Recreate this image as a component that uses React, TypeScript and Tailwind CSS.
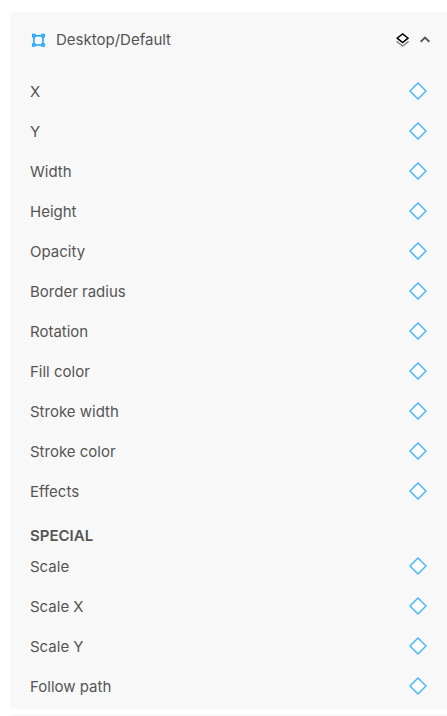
import { useState } from "react";

const properties = [
  "X",
  "Y",
  "Width",
  "Height",
  "Opacity",
  "Border radius",
  "Rotation",
  "Fill color",
  "Stroke width",
  "Stroke color",
  "Effects",
];

const specialProperties = ["Scale", "Scale X", "Scale Y", "Follow path"];

function FrameIcon() {
  return (
    <svg width="16" height="16" viewBox="0 0 16 16" fill="none" stroke="#18a0fb" aria-hidden="true">
      <path d="M5 3.8h7M5 13h7M3.9 5v7M13 5v7" strokeWidth="1.5" />
      <path
        d="M2.6 2.5h2.4v2.4H2.6zM11.9 2.5h2.4v2.4h-2.4zM2.6 11.8h2.4v2.4H2.6zM11.9 11.8h2.4v2.4h-2.4z"
        fill="#d4ecfd"
        strokeWidth="1.3"
      />
    </svg>
  );
}

function LayersIcon() {
  return (
    <svg width="14" height="16" viewBox="0 0 14 16" fill="none" aria-hidden="true">
      <path d="M.6 9.4l6 4.7 6-4.7" stroke="#8a8a8a" strokeWidth="1.5" />
      <path d="M6.6 1.9l5.4 4.3-5.4 4.4-5.4-4.4z" fill="#fff" stroke="#000" strokeWidth="1.5" />
    </svg>
  );
}

function ChevronIcon({ open }: { open: boolean }) {
  return (
    <svg
      width="10"
      height="8"
      viewBox="0 0 10 8"
      fill="none"
      className={open ? "" : "rotate-180"}
      aria-hidden="true"
    >
      <path d="M.7 5.8L5 1.6l4.3 4.2" stroke="#555" strokeWidth="1.9" />
    </svg>
  );
}

function PropertyRow({ name }: { name: string }) {
  return (
    <li className="flex h-10 items-center justify-between">
      <span className="pt-0.5">{name}</span>
      <button type="button" aria-label={`Add ${name} keyframe`}>
        <svg width="18" height="18" viewBox="0 0 18 18" aria-hidden="true">
          <path d="M9 1L17 9 9 17 1 9z" fill="#fff" stroke="#4ab5fc" strokeWidth="1.5" />
        </svg>
      </button>
    </li>
  );
}

export default function App() {
  const [open, setOpen] = useState(true);

  return (
    <main className="h-screen overflow-hidden bg-white pt-3 pl-2.5 font-['Inter',sans-serif] text-[15px] leading-5 text-[#555]">
      <section className="rounded-tl bg-[#f8f8f8] px-5 pb-[3px]">
        <header className="mb-[3px] flex h-14 items-center justify-between">
          <div className="flex items-center gap-2.5">
            <FrameIcon />
            <h1>Desktop/Default</h1>
          </div>
          <div className="-mr-[3px] flex items-center gap-2.5">
            <button type="button" aria-label="Select layer">
              <LayersIcon />
            </button>
            <button
              type="button"
              aria-label="Toggle properties"
              aria-expanded={open}
              className="flex h-5 items-center"
              onClick={() => setOpen(!open)}
            >
              <ChevronIcon open={open} />
            </button>
          </div>
        </header>
        {open && (
          <>
            <ul>
              {properties.map((name) => (
                <PropertyRow key={name} name={name} />
              ))}
            </ul>
            <h2 className="pt-[15px] font-semibold">SPECIAL</h2>
            <ul>
              {specialProperties.map((name) => (
                <PropertyRow key={name} name={name} />
              ))}
            </ul>
          </>
        )}
      </section>
      <section className="mt-[5px] h-14 rounded-tl bg-[#f8f8f8]" />
    </main>
  );
}
